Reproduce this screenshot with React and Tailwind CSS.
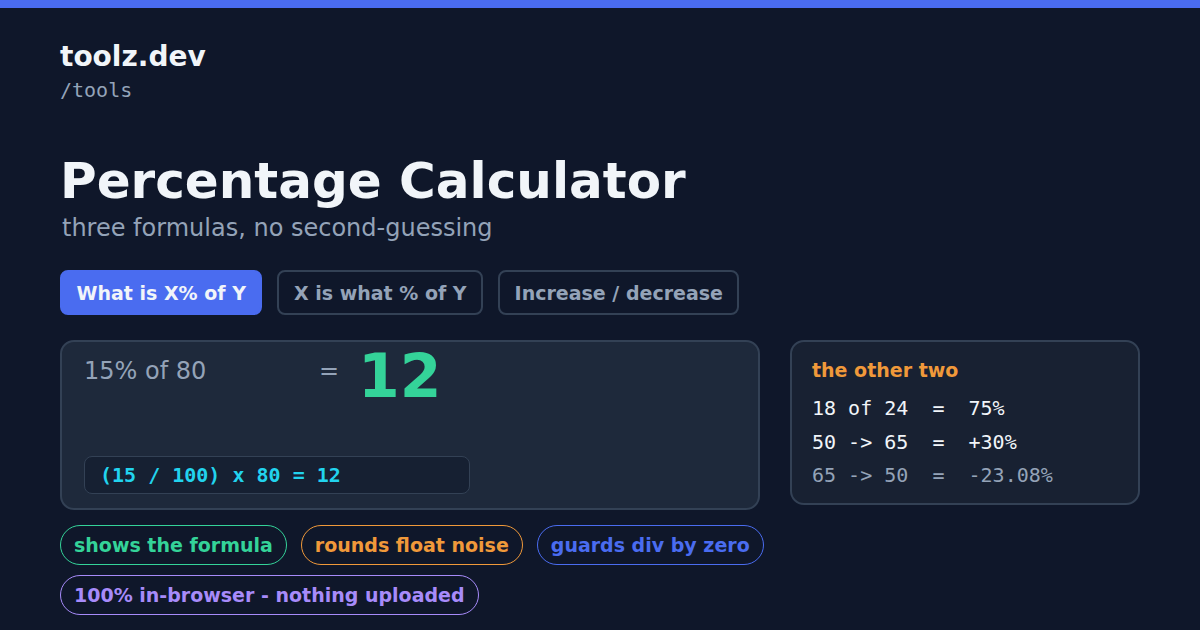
import React from "react";

const tabs = [
  { label: "What is X% of Y", active: true },
  { label: "X is what % of Y", active: false },
  { label: "Increase / decrease", active: false },
];

const others = [
  { text: "18 of 24  =  75%", muted: false },
  { text: "50 -> 65  =  +30%", muted: false },
  { text: "65 -> 50  =  -23.08%", muted: true },
];

const chips = [
  { label: "shows the formula", cls: "text-[#34d399] border-[#34d399]" },
  { label: "rounds float noise", cls: "text-[#f0993a] border-[#f0993a]" },
  { label: "guards div by zero", cls: "text-[#4a6cf0] border-[#4a6cf0]" },
  { label: "100% in-browser - nothing uploaded", cls: "text-[#a78bfa] border-[#a78bfa]" },
];

const App = () => {
  return (
    <div className="w-[1200px] h-[630px] overflow-hidden bg-[#0f172a] font-['DejaVu_Sans',sans-serif]">
      <div className="h-2 bg-[#4a6cf0]" />

      <div className="px-[60px] pt-8">
        {/* brand */}
        <div className="text-[28px] font-bold text-[#f1f5f9] leading-[normal]">toolz.dev</div>
        <div className="mt-[5px] text-[20px] text-[#94a3b8] leading-[normal] font-['DejaVu_Sans_Mono',monospace]">
          /tools
        </div>

        {/* heading */}
        <h1 className="mt-[50px] text-[50px] font-bold text-[#f1f5f9] leading-[58px]">
          Percentage Calculator
        </h1>
        <p className="mt-[4px] ml-[2px] text-[24px] text-[#94a3b8] leading-[normal]">
          three formulas, no second-guessing
        </p>

        {/* tabs */}
        <div className="mt-[28px] flex gap-[15px]">
          {tabs.map((t) => (
            <button
              key={t.label}
              className={`px-[14.5px] py-[9.5px] rounded-lg border-2 text-[19px] font-bold leading-[normal] ${
                t.active
                  ? "bg-[#4a6cf0] border-[#4a6cf0] text-[#f1f5f9]"
                  : "bg-transparent border-[#334155] text-[#94a3b8]"
              }`}
            >
              {t.label}
            </button>
          ))}
        </div>

        <div className="mt-[25px] flex items-start gap-[30px]">
          {/* main result */}
          <div className="w-[700px] h-[170px] flex flex-col rounded-[14px] border-2 border-[#334155] bg-[#1e293b] pl-[22px] pr-6 pt-1 pb-[14px]">
            <div className="flex items-start">
              <span className="w-[235px] mt-[11px] text-[24px] text-[#94a3b8] leading-[normal]">15% of 80</span>
              <span className="mt-[11px] text-[24px] text-[#94a3b8] leading-[normal]">=</span>
              <span className="ml-[19px] text-[60px] font-bold leading-none text-[#34d399]">12</span>
            </div>
            <div className="mt-auto w-[386px] h-[38px] flex items-center pl-[15px] rounded-lg border border-[#334155] bg-[#162032]">
              <span className="text-[20px] font-bold text-[#22d3ee] leading-[normal] font-['DejaVu_Sans_Mono',monospace]">
                (15 / 100) x 80 = 12
              </span>
            </div>
          </div>

          {/* other formulas */}
          <div className="w-[350px] rounded-[14px] border-2 border-[#334155] bg-[#182132] px-5 pt-[17px] pb-[10px]">
            <div className="text-[19px] font-bold text-[#f0993a] leading-[normal]">the other two</div>
            <div className="mt-[11px] font-['DejaVu_Sans_Mono',monospace] text-[20px] leading-[33.5px]">
              {others.map((o) => (
                <div key={o.text} className={`whitespace-pre ${o.muted ? "text-[#94a3b8]" : "text-[#f1f5f9]"}`}>
                  {o.text}
                </div>
              ))}
            </div>
          </div>
        </div>

        {/* chips */}
        <div className="mt-[15px] w-[1080px] flex flex-wrap gap-x-[14px] gap-y-[10px]">
          {chips.map((c) => (
            <span
              key={c.label}
              className={`px-[13px] py-2 rounded-full border-[1.5px] text-[19px] font-bold leading-[normal] ${c.cls}`}
            >
              {c.label}
            </span>
          ))}
        </div>
      </div>
    </div>
  );
};

export default App;
